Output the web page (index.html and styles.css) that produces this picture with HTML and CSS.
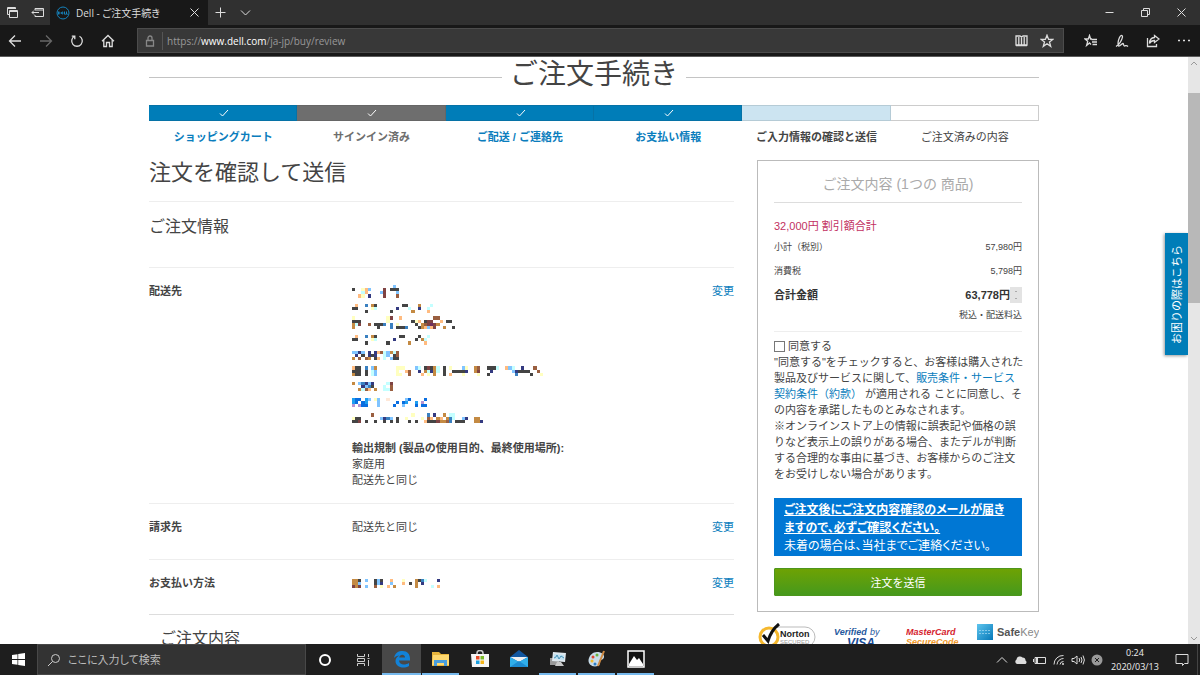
FILE: index.html
```html
<!DOCTYPE html>
<html lang="ja">

<head>
  <meta charset="UTF-8">
  <meta name="viewport" content="width=device-width, initial-scale=1.0">
  <title>Dell - ご注文手続き</title>
  <link rel="stylesheet" href="styles.css">
</head>

<body>
  <header class="browser">
    <div class="tab-strip">
      <button class="strip-button" aria-label="Tabs"><svg width="13" height="13" viewBox="0 0 13 13"><path d="M3 8.500H1.500V1.500H9.500V3M1.500 2.500H9.500M3.500 10H3.500V4.500H11.500V11.500H3.500ZM3.500 5.500H11.500" /></svg></button>
      <button class="strip-button" aria-label="Set aside"><svg width="13" height="13" viewBox="0 0 13 13"><path d="M4 4V2.500H12.500V10.500H4V9M4 4H12.500M1 6.500H8M3 4.500L1 6.500L3 8.500" /></svg></button>
      <div class="tab">
        <svg class="dell" width="14" height="14" viewBox="0 0 14 14"><circle cx="7" cy="7" r="6" /><path d="M2.500 5.800V8.200C4.500 8.200 4.500 5.800 2.500 5.800M7 5.800L5 7L7 8.200M6 7H7.500M8.500 5.500V8.200H9.800M10.500 5.500V8.200H11.800" /></svg>
        <span class="tab-title">Dell - ご注文手続き</span>
        <button class="plain" aria-label="Close tab"><svg width="11" height="11" viewBox="0 0 11 11"><path d="M1.500 1.500L9.500 9.500M9.500 1.500L1.500 9.500" /></svg></button>
      </div>
      <button class="strip-button" aria-label="New tab"><svg width="13" height="13" viewBox="0 0 13 13"><path d="M6.500 1.500V11.500M1.500 6.500H11.500" /></svg></button>
      <button class="strip-button" aria-label="Tab list"><svg width="13" height="13" viewBox="0 0 13 13"><path d="M2 4.500L6.500 9L11 4.500" /></svg></button>
      <div class="window-buttons">
        <button class="plain" aria-label="Minimize"><svg width="9" height="9" viewBox="0 0 9 9"><path d="M0.500 4.500H8.500" /></svg></button>
        <button class="plain" aria-label="Restore"><svg width="9" height="9" viewBox="0 0 9 9"><path d="M0.500 2.500H6.500V8.500H0.500ZM2.500 2V0.500H8.500V6.500H7" /></svg></button>
        <button class="plain" aria-label="Close"><svg width="9" height="9" viewBox="0 0 9 9"><path d="M0.500 0.500L8.500 8.500M8.500 0.500L0.500 8.500" /></svg></button>
      </div>
    </div>

    <div class="toolbar">
      <nav class="nav-buttons">
        <button class="plain" aria-label="Back"><svg width="14" height="14" viewBox="0 0 14 14"><path d="M13 7H1.500M7 1.500L1.500 7L7 12.500" /></svg></button>
        <button class="plain dim" aria-label="Forward"><svg width="14" height="14" viewBox="0 0 14 14"><path d="M1 7H12.500M7 1.500L12.500 7L7 12.500" /></svg></button>
        <button class="plain" aria-label="Refresh"><svg width="14" height="14" viewBox="0 0 14 14"><path d="M4.500 2.300A5.300 5.300 0 1 0 9.500 2.300M1.800 2.200H4.800V5.200" /></svg></button>
        <button class="plain" aria-label="Home"><svg width="14" height="14" viewBox="0 0 14 14"><path d="M1 7.200L7 1.500L13 7.200M2.800 6V12.500H5.500V8.500H8.500V12.500H11.200V6" /></svg></button>
      </nav>
      <div class="address">
        <svg class="lock" width="10" height="12" viewBox="0 0 10 12"><path d="M1.500 5.500H8.500V11H1.500ZM3 5.500V3A2 2 0 0 1 7 3V5.500" /></svg>
        <span class="url">https://<b>www.dell.com</b>/ja-jp/buy/review</span>
        <button class="plain" aria-label="Reading view"><svg width="13" height="13" viewBox="0 0 13 13"><path d="M1 2H5L6.500 3L8 2H12V11H1ZM6.500 3V11M3.800 3V10.500M9.200 3V10.500M1 11.500H12" /></svg></button>
        <button class="plain" aria-label="Add to favorites"><svg width="14" height="14" viewBox="0 0 14 14"><path d="M7 1.200L8.600 5.400H12.800L9.500 8L10.700 12.400L7 9.800L3.300 12.400L4.500 8L1.200 5.400H5.400Z" /></svg></button>
      </div>
      <div class="tool-buttons">
        <button class="plain" aria-label="Favorites"><svg width="14" height="14" viewBox="0 0 14 14"><path d="M8 5H6.600L5.500 1.500L4.300 5H1L3.700 7.300L2.600 11.500L5.500 9L7 10.500M7.500 5.500H13M8 8H13M8.500 10.500H13" /></svg></button>
        <button class="plain" aria-label="Notes"><svg width="14" height="14" viewBox="0 0 14 14"><path d="M1 12.500C4 11 7 6 7.500 3C7.500 1 5.800 0.500 4.500 3.500C3 7 2.500 10 3.500 12C5 12.500 7 9.500 8 9.500C9 9.500 8 12 9.500 12C11 12 11 10.500 13 12.500" /></svg></button>
        <button class="plain" aria-label="Share"><svg width="14" height="14" viewBox="0 0 14 14"><path d="M1.500 4V12.500H10.500V10M8.500 1.500L13 5L8.500 8.500V6.500C6 6.500 4.500 7.500 3.500 9.500C3.500 6 5 3.800 8.500 3.500Z" /></svg></button>
        <button class="plain" aria-label="More"><svg width="14" height="14" viewBox="0 0 14 14"><path stroke-dasharray="2 3" d="M1 6.500H13" /></svg></button>
      </div>
    </div>
  </header>

  <div class="viewport">
    <main class="page">
      <div class="content">
        <h1 class="page-title">ご注文手続き</h1>

        <ol class="steps">
          <li class="step done"><span class="bar"><svg width="10" height="8" viewBox="0 0 10 8"><path d="M1 4.500L3.500 7L9 1" /></svg></span><a href="#">ショッピングカート</a></li>
          <li class="step signed"><span class="bar"><svg width="10" height="8" viewBox="0 0 10 8"><path d="M1 4.500L3.500 7L9 1" /></svg></span>サインイン済み</li>
          <li class="step done"><span class="bar"><svg width="10" height="8" viewBox="0 0 10 8"><path d="M1 4.500L3.500 7L9 1" /></svg></span><a href="#">ご配送 / ご連絡先</a></li>
          <li class="step done"><span class="bar"><svg width="10" height="8" viewBox="0 0 10 8"><path d="M1 4.500L3.500 7L9 1" /></svg></span><a href="#">お支払い情報</a></li>
          <li class="step current"><span class="bar"></span>ご入力情報の確認と送信</li>
          <li class="step"><span class="bar"></span>ご注文済みの内容</li>
        </ol>

        <div class="columns">
          <section class="review">
            <h2 class="review-title">注文を確認して送信</h2>
            <h3 class="section-title">ご注文情報</h3>

            <div class="row shipping">
              <b>配送先</b>
              <div>
                <svg class="mosaic" id="addressMosaic" width="194" height="141" viewBox="0 0 62 45"></svg>
                <b>輸出規制 (製品の使用目的、最終使用場所):</b><br>
                家庭用<br>
                配送先と同じ
              </div>
              <a href="#">変更</a>
            </div>
            <div class="row">
              <b>請求先</b>
              <div>配送先と同じ</div>
              <a href="#">変更</a>
            </div>
            <div class="row last">
              <b>お支払い方法</b>
              <div><svg class="mosaic short" id="paymentMosaic" width="88" height="10" viewBox="0 0 28 3" preserveAspectRatio="xMinYMin"></svg></div>
              <a href="#">変更</a>
            </div>
            <h3 class="items-title">ご注文内容</h3>
          </section>

          <aside>
            <div class="summary">
              <h2 class="summary-title">ご注文内容 (1つの 商品)</h2>
              <p class="discount">32,000円 割引額合計</p>
              <dl class="amounts">
                <div><dt>小計（税別）</dt><dd>57,980円</dd></div>
                <div><dt>消費税</dt><dd>5,798円</dd></div>
                <div class="total"><dt>合計金額</dt><dd>63,778円<span class="spin"><svg width="12" height="16" viewBox="0 0 12 16"><path d="M5 5L6 4L7 5M5 11L6 12L7 11" /></svg></span></dd></div>
              </dl>
              <p class="tax-note">税込・配送料込</p>

              <div class="terms">
                <label><input type="checkbox" class="agree">同意する</label>
                <p>"同意する"をチェックすると、お客様は購入された<br>
                  製品及びサービスに関して、<a href="#">販売条件・サービス<br>
                  契約条件（約款）</a> が適用される ことに同意し、そ<br>
                  の内容を承諾したものとみなされます。<br>
                  ※オンラインストア上の情報に誤表記や価格の誤<br>
                  りなど表示上の誤りがある場合、またデルが判断<br>
                  する合理的な事由に基づき、お客様からのご注文<br>
                  をお受けしない場合があります。</p>
              </div>

              <div class="notice">
                <b>ご注文後にご注文内容確認のメールが届き<br>
                  ますので、必ずご確認ください。</b><br>
                未着の場合は、当社までご連絡ください。
              </div>
              <button class="submit">注文を送信</button>
            </div>

            <div class="badges">
              <svg width="60" height="26" viewBox="0 0 60 26">
                <rect x="12" y="4" width="46" height="20" rx="10" fill="#fff" stroke="#bbb" />
                <circle cx="12" cy="14" r="9" fill="#fff" stroke="#f5b82e" stroke-width="3" />
                <path d="M6 12L11 18C13 11 17 5 22 1" fill="none" stroke="#111" stroke-width="3" />
                <text x="23" y="14" class="norton">Norton</text>
                <text x="23" y="21" class="secured">SECURED</text>
              </svg>
              <svg width="56" height="26" viewBox="0 0 56 26">
                <text x="0" y="12" class="verified">Verified</text><text x="36" y="12" class="by">by</text>
                <text x="13" y="24" class="visa">VISA</text>
              </svg>
              <svg width="54" height="26" viewBox="0 0 54 26">
                <text x="0" y="12" class="master">MasterCard</text>
                <text x="0" y="22" class="secure">SecureCode</text>
              </svg>
              <svg width="62" height="26" viewBox="0 0 62 26">
                <defs><linearGradient id="amex" x1="0" y1="0" x2="1" y2="1"><stop offset="0" stop-color="#5ec5ee" /><stop offset="1" stop-color="#0678b8" /></linearGradient></defs>
                <rect y="1" width="16" height="16" fill="url(#amex)" />
                <path d="M2 7.500H14M2 10.500H14" stroke="#a9ddf5" opacity="0.700" stroke-dasharray="2 1" />
                <text x="20" y="13" class="safekey"><tspan class="safe">Safe</tspan>Key</text>
              </svg>
            </div>
          </aside>
        </div>
      </div>
      <a href="#" class="help-tab"><span>お困りの際はこちら</span></a>
    </main>
    <div class="scrollbar">
      <svg width="12" height="12" viewBox="0 0 12 12"><path d="M3 8L6 5L9 8" /></svg>
      <div class="track"><div class="thumb"></div></div>
      <svg width="12" height="12" viewBox="0 0 12 12"><path d="M3 5L6 8L9 5" /></svg>
    </div>
  </div>

  <footer class="taskbar">
    <button class="start" aria-label="Start"><svg width="13" height="13" viewBox="0 0 13 13"><path d="M0 2L5.500 1.200V6H0ZM6.200 1L13 0V6H6.200ZM0 7H5.500V11.800L0 11ZM6.200 7H13V13L6.200 12Z" /></svg></button>
    <label class="search">
      <svg width="14" height="14" viewBox="0 0 14 14"><circle cx="8.500" cy="5.500" r="4" /><path d="M5.500 8.500L1 13" /></svg>
      <input type="text" placeholder="ここに入力して検索" aria-label="ここに入力して検索">
    </label>
    <div class="system-buttons">
      <button class="task" aria-label="Cortana"><svg width="14" height="14" viewBox="0 0 14 14"><circle cx="7" cy="7" r="5" fill="none" stroke="#fff" stroke-width="2" /></svg></button>
      <button class="task" aria-label="Task view"><svg width="14" height="14" viewBox="0 0 14 14"><path d="M1.500 1V3.500H8.500V1M1.500 13V10.500H8.500V13M1.500 5.500H8.500V8.500H1.500ZM12.500 1V4M12.500 7V13M11.500 5.500H13.500" fill="none" stroke="#ccc" /></svg></button>
    </div>
    <div class="apps">
      <button class="task open active" aria-label="Edge"><svg width="18" height="18" viewBox="0 0 18 18"><path d="M1 8C2 2.800 5.500 1 9.500 1C14.500 1 17 4.500 17 8.500V10.500H6C6.200 15 12 15.500 16 13V16C9.500 19.500 2.500 16.500 2.500 11C2.500 8.500 4 6.500 6.500 5.500C4 5.500 2.200 6.500 1 8ZM6.200 7.500H12C12 3.800 6.800 3.800 6.200 7.500Z" fill="#1282d8" /></svg></button>
      <button class="task open" aria-label="Explorer"><svg width="18" height="18" viewBox="0 0 18 18"><path d="M0 2H7L9 4H17V16H0Z" fill="#e9b53c" /><path d="M1 5H17V15H0Z" fill="#ffd970" /><path d="M2 16V10H15V16H12V13H5V16Z" fill="#4a9edc" /></svg></button>
      <button class="task" aria-label="Store"><svg width="18" height="18" viewBox="0 0 18 18"><path d="M6 5V3A3 2.500 0 0 1 12 3V5" fill="none" stroke="#ccc" stroke-width="1.500" /><path d="M0 4H18V17H1Z" fill="#f5f5f5" /><path d="M5 6H8.500V9.500H5Z" fill="#e64a26" /><path d="M9.500 6H13V9.500H9.500Z" fill="#79b928" /><path d="M5 10.500H8.500V14H5Z" fill="#1a9fe0" /><path d="M9.500 10.500H13V14H9.500Z" fill="#f5b61a" /></svg></button>
      <button class="task" aria-label="Mail"><svg width="20" height="18" viewBox="0 0 20 18"><path d="M1 7L10 0L19 7V17H1Z" fill="#1257a0" /><path d="M1 7H19L10 12Z" fill="#f0f0f0" /><path d="M1 7L10 12L19 7V17H1Z" fill="#30aeea" /><path d="M1 17L10 11L19 17Z" fill="#1c8bd2" /></svg></button>
      <button class="task open" aria-label="Monitor"><svg width="18" height="18" viewBox="0 0 18 18"><path d="M1 8H10V15H1Z" fill="#999" /><path d="M4 2L17 3L16 12L3 11Z" fill="#dfe8ee" /><path d="M5 4L15 5V10L5 9Z" fill="#bfe1f2" /><path d="M5 8L7 7L8 5L10 9L12 6L15 8" stroke="#4a93b8" fill="none" /><path d="M8 12H12L15 16H6Z" fill="#c8c8c8" /></svg></button>
      <button class="task open" aria-label="Paint"><svg width="18" height="18" viewBox="0 0 18 18"><path d="M9 2C17 2 18 9 13 10C9 11 14 14 10 16C3 18-1 13 1 8C2 5 5 2 9 2Z" fill="#c8dce8" /><circle cx="5" cy="7" r="1.500" fill="#df4530" /><circle cx="9" cy="5" r="1.500" fill="#6db33f" /><circle cx="4" cy="11" r="1.500" fill="#efba2e" /><circle cx="7" cy="14" r="1.500" fill="#2d7dc4" /><path d="M16 1L10 16" stroke="#cf8a42" stroke-width="2" /></svg></button>
      <button class="task open" aria-label="Photos"><svg width="18" height="18" viewBox="0 0 18 18"><path d="M1 1H17V17H1Z" fill="#111" stroke="#fff" stroke-width="1.500" /><path d="M2 14L7 6L10 10L12 8L16 14V16H2Z" fill="#fff" /></svg></button>
    </div>
    <div class="tray">
      <svg width="14" height="14" viewBox="0 0 14 14"><path d="M2 9.500L7 4.500L12 9.500" /></svg>
      <svg width="14" height="14" viewBox="0 0 14 14"><path class="solid" d="M3 11A2.500 2.500 0 0 1 2.500 6.500A3.500 3.500 0 0 1 8.500 4.500A3 3 0 0 1 11.500 7.500A2 2 0 0 1 11.500 11Z" /></svg>
      <svg width="14" height="14" viewBox="0 0 14 14"><path d="M2 4.500H12.500V10.500H2ZM0.500 6V9" /><path class="solid" d="M3 5H5V10H3Z" /></svg>
      <svg width="14" height="14" viewBox="0 0 14 14"><path d="M2 11.500A9 9 0 0 1 11.500 2.500M5 11.500A6.500 6.500 0 0 1 11.500 5.500M8 11.500A3.500 3.500 0 0 1 11.500 8.500" /><circle class="solid" cx="11" cy="11" r="1" /></svg>
      <svg width="14" height="14" viewBox="0 0 14 14"><path d="M1 5.500H3L6 3V11L3 8.500H1ZM8 5Q9.500 7 8 9M10 4Q12 7 10 10M12 2.500Q14.800 7 12 11.500" /></svg>
      <svg width="14" height="14" viewBox="0 0 14 14"><circle cx="7" cy="7" r="5.500" fill="#999" stroke="none" /><path class="cross" d="M5 5L9 9M9 5L5 9" /></svg>
    </div>
    <div class="clock">0:24<br>2020/03/13</div>
    <button class="notifications" aria-label="Notifications"><svg width="14" height="14" viewBox="0 0 14 14"><path d="M1 1.500H13V10.500H9.500L7.500 12.500V10.500H1Z" /></svg></button>
  </footer>

  <script src="mosaic.js"></script>
</body>

</html>
```
FILE: styles.css
```css
* {
  box-sizing: border-box;
}

body {
  margin: 0;
  height: 100vh;
  display: flex;
  flex-direction: column;
  overflow: hidden;
  background-color: #fff;
  color: #444;
  font-family: "Liberation Sans", "Noto Sans CJK JP", sans-serif;
  font-size: 11px;
  line-height: 16px;
}

h1, h2, h3, p, dl, dd, ol {
  margin: 0;
  padding: 0;
}

h1, h2, h3 {
  font-weight: normal;
}

a {
  color: #0a7dbd;
  text-decoration: none;
}

svg {
  display: block;
  flex: none;
}

button {
  border: none;
  padding: 0;
  background: none;
  display: flex;
  align-items: center;
  justify-content: center;
}

/* Browser window */
.browser {
  background-color: #181818;
  border-bottom: 1px solid #5c5c5c;
  color: #ddd;
  font-family: "Open Sans", "Noto Sans CJK JP", sans-serif;
}

.browser svg {
  fill: none;
  stroke: #ddd;
}

.tab-strip {
  display: flex;
  align-items: center;
  height: 25px;
  background-color: #303030;
}

.strip-button {
  width: 25px;
  height: 25px;
}

.tab {
  display: flex;
  align-items: center;
  width: 158px;
  height: 25px;
  padding: 0 8px 0 6px;
  background-color: #181818;
}

.browser .dell {
  stroke: #1583bd;
}

.tab-title {
  flex: 1;
  padding-left: 6px;
  font-size: 10px;
  font-feature-settings: "palt";
}

.window-buttons {
  display: flex;
  gap: 27px;
  margin-left: auto;
  padding-right: 14px;
}

.toolbar {
  display: flex;
  align-items: center;
  height: 31px;
  padding: 0 9px 0 8px;
}

.toolbar svg {
  stroke-width: 1.3;
}

.nav-buttons {
  display: flex;
  gap: 17px;
  width: 129px;
}

.nav-buttons .dim {
  opacity: 0.4;
}

.address {
  flex: 1;
  display: flex;
  align-items: center;
  gap: 12px;
  height: 25px;
  padding: 0 9px 0 7px;
  border: 1px solid #4c4c4c;
  background-color: #383838;
}

.address .lock {
  stroke: #888;
}

.url {
  flex: 1;
  margin-left: -5px;
  padding-left: 4px;
  border-left: 1px solid #555;
  color: #999;
  font-size: 10px;
  line-height: 18px;
}

.url b {
  color: #fff;
  font-weight: 500;
}

.tool-buttons {
  display: flex;
  gap: 17px;
  padding-left: 20px;
}

/* Page area */
.viewport {
  flex: 1;
  min-height: 0;
  display: flex;
}

.page {
  position: relative;
  flex: 1;
  overflow: hidden;
}

.content {
  width: 75%;
  max-width: 890px;
  margin: 0 auto;
}

.page-title {
  display: flex;
  align-items: center;
  gap: 8px;
  font-size: 28px;
  line-height: 36px;
}

.page-title::before,
.page-title::after {
  content: "";
  flex: 1;
  margin-top: 4px;
  border-top: 1px solid #c4c4c4;
}

.steps {
  display: grid;
  grid-template-columns: repeat(6, 1fr);
  margin-top: 12px;
  list-style: none;
  text-align: center;
}

.bar {
  display: flex;
  align-items: center;
  justify-content: center;
  height: 16px;
  margin-bottom: 8px;
  padding-left: 3px;
  border: 1px solid #ccc;
  border-left: none;
  background-color: #fff;
}

.bar svg {
  fill: none;
  stroke: #fff;
}

.done,
.signed,
.current {
  font-weight: bold;
}

.done .bar {
  background-color: #007db8;
  border-color: #0672a6;
}

.signed {
  color: #6e6e6e;
}

.signed .bar {
  background-color: #6e6e6e;
  border-color: #666;
}

.current .bar {
  background-color: #cce4f1;
  border-color: #b5cbd6;
}

.columns {
  display: grid;
  grid-template-columns: 1fr 282px;
  gap: 23px;
  padding-top: 15px;
}

.review-title {
  height: 42px;
  border-bottom: 1px solid #eee;
  font-size: 22px;
  line-height: 26px;
}

.section-title {
  height: 66px;
  padding-top: 12px;
  border-bottom: 1px solid #eee;
  font-size: 16px;
  line-height: 26px;
}

.row {
  display: grid;
  grid-template-columns: 203px 1fr auto;
  padding: 15px 0 24px;
  border-bottom: 1px solid #eee;
}

.row.shipping {
  padding-bottom: 15px;
}

.row.last {
  padding-bottom: 23px;
  border-color: #ddd;
}

.mosaic {
  margin: 2px 0 14px;
  shape-rendering: crispEdges;
}

.mosaic.short {
  margin: 4px 0 0;
}

.items-title {
  padding: 11px;
  font-size: 16px;
  line-height: 26px;
}

/* Order summary */
.summary {
  padding: 9px 16px;
  padding-bottom: 15px;
  border: 1px solid #bbb;
}

.summary-title {
  padding-bottom: 3px;
  border-bottom: 1px solid #ddd;
  color: #aaa;
  font-size: 14px;
  line-height: 29px;
  text-align: center;
}

.discount {
  margin-top: 15px;
  color: #c2305f;
}

.amounts {
  font-size: 9px;
}

.amounts div {
  display: flex;
  justify-content: space-between;
  margin-top: 8px;
}

.amounts div:first-child {
  margin-top: 5px;
}

.amounts .total {
  color: #333;
  font-size: 11px;
  font-weight: bold;
}

.total dd {
  display: flex;
}

.spin {
  background-color: #e3e3e3;
}

.spin svg {
  fill: none;
  stroke: #aaa;
}

.tax-note {
  padding: 4px 0 8px;
  border-bottom: 1px solid #eee;
  font-size: 9px;
  text-align: right;
}

.terms {
  margin-top: 6px;
  white-space: nowrap;
}

.terms label {
  display: flex;
  align-items: center;
}

.agree {
  appearance: none;
  width: 11px;
  height: 11px;
  margin: 1px 3px 0 0;
  border: 1px solid #777;
  background-color: #fff;
}

.notice {
  margin-top: 16px;
  padding: 2px 10px;
  background-color: #0077d4;
  color: #fff;
  font-family: "Noto Sans CJK JP", sans-serif;
  font-size: 12px;
  line-height: 18px;
  font-feature-settings: "palt";
  white-space: nowrap;
}

.notice b {
  text-decoration: underline;
}

.submit {
  width: 100%;
  height: 28px;
  margin-top: 12px;
  border: 1px solid #4d961c;
  border-radius: 1px;
  background: linear-gradient(#6ea204, #46991c);
  color: #fff;
  font-family: inherit;
  font-size: 11px;
}

.badges {
  display: flex;
  justify-content: space-between;
  margin-top: 11px;
}

.badges text {
  font-family: "Liberation Sans", sans-serif;
}

.badges .norton {
  fill: #222;
  font-size: 9px;
  font-weight: bold;
}

.badges .secured {
  fill: #999;
  font-size: 6px;
}

.badges .verified,
.badges .by {
  fill: #24579c;
  font-size: 9px;
  font-style: italic;
  font-weight: bold;
}

.badges .by {
  font-weight: normal;
}

.badges .visa {
  fill: #174b94;
  font-size: 12px;
  font-style: italic;
  font-weight: bold;
}

.badges .master,
.badges .secure {
  fill: #d5232e;
  font-size: 9px;
  font-style: italic;
  font-weight: bold;
}

.badges .secure {
  fill: #f09a2c;
}

.badges .safekey {
  fill: #888;
  font-size: 11px;
}

.badges .safe {
  fill: #555;
  font-weight: bold;
}

.help-tab {
  position: absolute;
  top: 176px;
  right: 0;
  display: flex;
  align-items: center;
  justify-content: center;
  width: 23px;
  height: 122px;
  background-color: #007db8;
  box-shadow: -1px 1px 3px rgba(0, 0, 0, 0.4);
  color: #fff;
}

.help-tab span {
  writing-mode: vertical-rl;
  text-orientation: sideways;
  transform: rotate(180deg);
}

.scrollbar {
  display: flex;
  flex-direction: column;
  width: 12px;
  background-color: #e6e6e6;
}

.scrollbar svg {
  fill: none;
  stroke: #999;
}

.track {
  flex: 1;
  padding-top: 24px;
}

.thumb {
  height: 39%;
  background-color: #b8b8b8;
}

/* Taskbar */
.taskbar {
  display: flex;
  height: 31px;
  background-color: #1e1e1e;
  color: #eee;
  font-family: "Open Sans", "Noto Sans CJK JP", sans-serif;
}

.start {
  width: 37px;
}

.start svg {
  fill: #fff;
}

.search {
  display: flex;
  align-items: center;
  gap: 5px;
  width: 269px;
  padding: 0 9px;
  border: 1px solid #484848;
  background-color: #333;
}

.search svg {
  fill: none;
  stroke: #ccc;
}

.search input {
  flex: 1;
  min-width: 0;
  border: none;
  outline: none;
  background: none;
  font-family: inherit;
  font-size: 11px;
  font-feature-settings: "palt";
}

.search input::placeholder {
  color: #bbb;
}

.system-buttons,
.apps {
  display: flex;
}

.task {
  width: 39px;
  border: 0 solid #1e1e1e;
}

.system-buttons .task {
  width: 38px;
}

.apps .task {
  border-bottom-width: 2px;
}

.task.open {
  border-image: linear-gradient(90deg, #1e1e1e 3px, #76b9ed 3px, #76b9ed 36px, #1e1e1e 36px) 2;
}

.task.active {
  background-color: #484848;
  border-image: none;
  border-color: #76b9ed;
}

.tray {
  display: flex;
  align-items: center;
  gap: 5px;
  margin-left: auto;
}

.tray svg,
.notifications svg {
  fill: none;
  stroke: #ddd;
}

.tray .solid {
  fill: #ddd;
  stroke: none;
}

.tray .cross {
  stroke: #1e1e1e;
}

.clock {
  width: 62px;
  padding-top: 2px;
  font-size: 9px;
  line-height: 14px;
  text-align: center;
}

.notifications {
  width: 32px;
  margin-right: 2px;
  border-right: 1px solid #444;
}
```
FILE: mosaic.js
```javascript
var colors = {
  k: "#444444", r: "#7f4343", o: "#ffbb80", b: "#80c4ff", c: "#c4ffff",
  n: "#343a80", y: "#ffffc0", t: "#c48a43", B: "#3a80c0", m: "#9a5f40",
  p: "#703060", d: "#0a6ee0", e: "#1e9ef0", v: "#b494d4", q: "#ffe8d8"
};

// Each token is a start column followed by one colour per cell
var address = {
  0: "13b",
  1: "0k 3yob 10r 12kkk",
  2: "3co 9br 14b",
  3: "2oy 5n 10r 14m",
  6: "1o 4B 6tk 16kk 21t 25c",
  7: "0kk 6yc 14n 18c 21n 24c",
  8: "4k 12k 19t 24o",
  10: "0y 11yr 15o 26mm",
  11: "0kkk 11y 19kyo 23krr 28o 30kk",
  12: "0tcr 5m 7kkkB 12B 14y 20k 22tmrprt",
  13: "0t 8k 12B 14kkkB 21ktobor 29t 32k",
  16: "1o 4B 6tk 15kk 21k 24c",
  17: "0kk 6yc 13n 20k 22tc",
  18: "4k 11k 18t 23o",
  21: "0bbnb 5n 7nomcbtcm",
  22: "1n 3k 5nkn 10cb 13km",
  23: "0t 2m 4mt 7ko 10c 12bkk",
  26: "0okk 4B 6bt 14yyy 20bc 23krktc 29k 31y 35by 39tm 43kkkc 49obc 54n 58m",
  27: "0kkk 4k 6cb 14y 17om 21n 23tcntc 29k 32kkkkn 39tr 44n 51bnkkkk 59m",
  28: "0tkk 4k 6cb 14yy 18m 22o 24y 26t 29k 31o 35y 40y 43k 52B 57k 60y",
  31: "0t 2bBnbn 11cr",
  32: "3nbBk 10c 12m",
  33: "2tcmo 7t 10ccm",
  36: "0edd 4eb 7yb 11q 17bd 23d",
  37: "0ed 3de 8b 14d 16de 20e 22v",
  38: "0v 2vdd 8b 13d 16b 20d 22dd",
  41: "6m 19y 24B 26n 29t 31cc",
  42: "0ykk 9bnBb 14k 17y 22y 24mo 27to 30tBc 35bn 39tt",
  43: "0kkr 4k 7k 10k 12k 14k 18k 20k 23okkkrttmB 33kk 35k 39ttn"
};

var payment = {
  0: "0ttk 4b 7kbk 12o 16y 20tkBc 27n",
  1: "0ttb 7kbn 12b 16o 18k 20t 22n",
  2: "0rtr 4b 7m 9y 11o 13t 20t 25c 27o"
};

function drawMosaic(id, rows) {
  var svg = document.getElementById(id);
  Object.keys(rows).forEach(function (y) {
    rows[y].split(" ").forEach(function (token) {
      var start = parseInt(token, 10);
      token.replace(/\d/g, "").split("").forEach(function (key, i) {
        var cell = document.createElementNS("http://www.w3.org/2000/svg", "rect");
        cell.setAttribute("x", start + i);
        cell.setAttribute("y", y);
        cell.setAttribute("width", 1);
        cell.setAttribute("height", 1);
        cell.setAttribute("fill", colors[key]);
        svg.appendChild(cell);
      });
    });
  });
}

drawMosaic("addressMosaic", address);
drawMosaic("paymentMosaic", payment);
```
